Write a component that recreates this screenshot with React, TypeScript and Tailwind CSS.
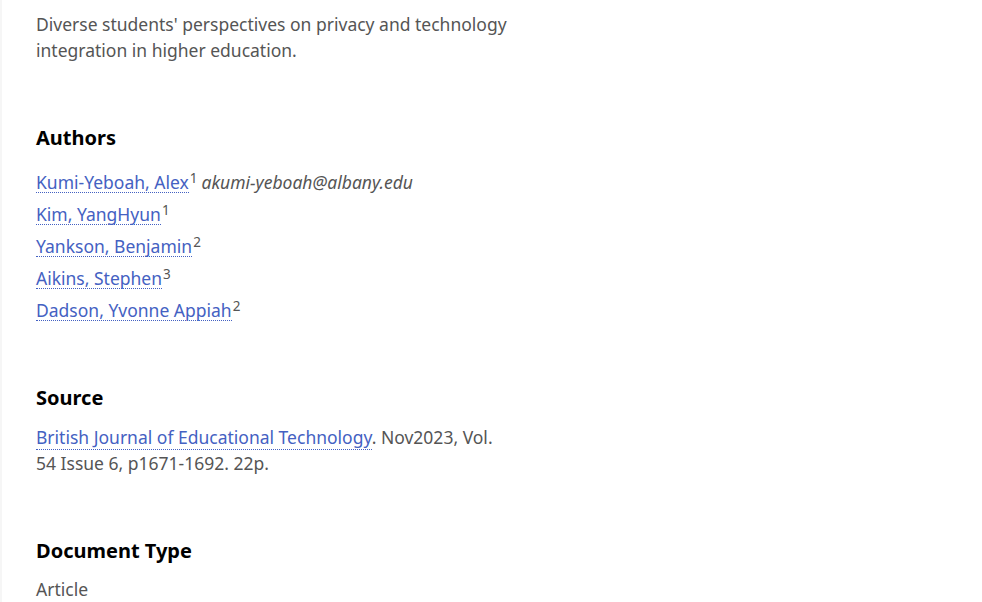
import React from 'react';

const authors = [
  { name: 'Kumi-Yeboah, Alex', sup: '1', email: 'akumi-yeboah@albany.edu' },
  { name: 'Kim, YangHyun', sup: '1' },
  { name: 'Yankson, Benjamin', sup: '2' },
  { name: 'Aikins, Stephen', sup: '3' },
  { name: 'Dadson, Yvonne Appiah', sup: '2' },
];

const linkCls = 'text-[#4461c2] border-b border-dotted border-[#4461c2] leading-[20px]';

export default function App() {
  return (
    <div
      className="min-h-[602px] bg-white border-l-2 border-[#f6f6f6] pl-[34px] pt-[11px] text-[17.5px] leading-[26px] text-[#555555]"
      style={{ fontFamily: '"Noto Sans", "Open Sans", sans-serif' }}
    >
      <div className="w-[478px]">
        <p>Diverse students' perspectives on privacy and technology integration in higher education.</p>

        {/* Authors */}
        <h2 className="mt-[61px] text-[20px] leading-[28px] font-bold text-black">Authors</h2>
        <ul className="mt-[14px]">
          {authors.map(a => (
            <li key={a.name} className="h-[32px] flex items-center">
              <span className={linkCls}>{a.name}</span>
              <sup className="ml-[1px] text-[13.5px] relative -top-[4px]">{a.sup}</sup>
              {a.email && <em className="ml-[4px]">{a.email}</em>}
            </li>
          ))}
        </ul>

        {/* Source */}
        <h2 className="mt-[58px] text-[20px] leading-[28px] font-bold text-black">Source</h2>
        <p className="mt-[12px]">
          <span className={linkCls}>British Journal of Educational Technology</span>. Nov2023, Vol. 54 Issue 6, p1671-1692. 22p.
        </p>

        {/* Document type */}
        <h2 className="mt-[61px] text-[20px] leading-[28px] font-bold text-black">Document Type</h2>
        <p className="mt-[11px]">Article</p>
      </div>
    </div>
  );
}
